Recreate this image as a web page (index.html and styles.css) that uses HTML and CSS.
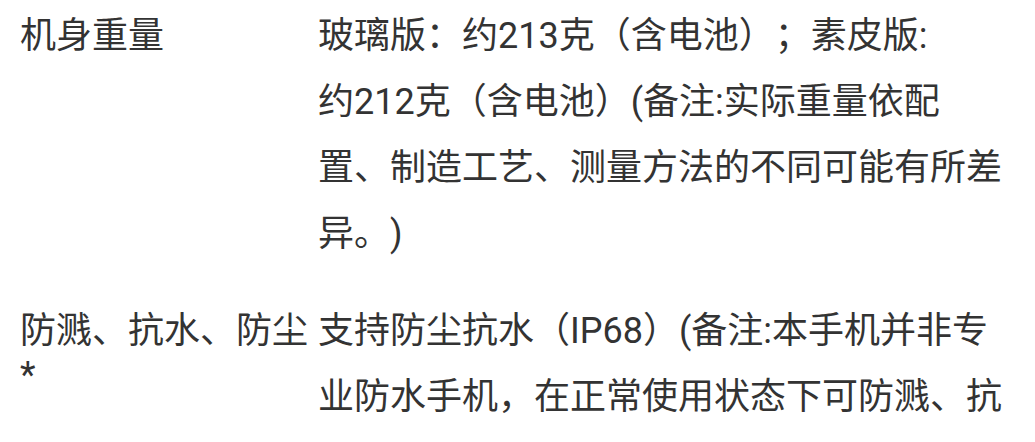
FILE: index.html
```html
<!DOCTYPE html>
<html lang="zh-CN">
<head>
<meta charset="utf-8">
<title>规格参数</title>
<link rel="stylesheet" href="styles.css">
</head>
<body>
<div class="specs">
  <div class="spec-row">
    <div class="spec-label">机身重量</div>
    <div class="spec-value">玻璃版：约213克（含电池）；素皮版:<br>约212克（含电池）(备注:实际重量依配置、制造工艺、测量方法的不同可能有所差异。)</div>
  </div>
  <div class="spec-row">
    <div class="spec-label">防溅、抗水、防尘*</div>
    <div class="spec-value">支持防尘抗水（IP68）(备注:本手机并非专业防水手机，在正常使用状态下可防溅、抗水、防尘，但不保证在所有环境下有效。)</div>
  </div>
</div>
</body>
</html>
```

FILE: styles.css
```css
html, body {
  margin: 0;
  padding: 0;
  background: #ffffff;
}

body {
  font-family: Roboto, "Noto Sans CJK SC", sans-serif;
  font-size: 36px;
  color: #333333;
  text-spacing-trim: space-all;
  overflow: hidden;
}

.specs {
  display: flex;
  flex-direction: column;
  gap: 31px;
  padding: 3px 0 0 20px;
}

.spec-row {
  display: grid;
  grid-template-columns: 298px 688px;
  align-items: start;
}

.spec-label {
  line-height: 44px;
  padding-top: 11px;
}

.spec-value {
  line-height: 66px;
}
```
